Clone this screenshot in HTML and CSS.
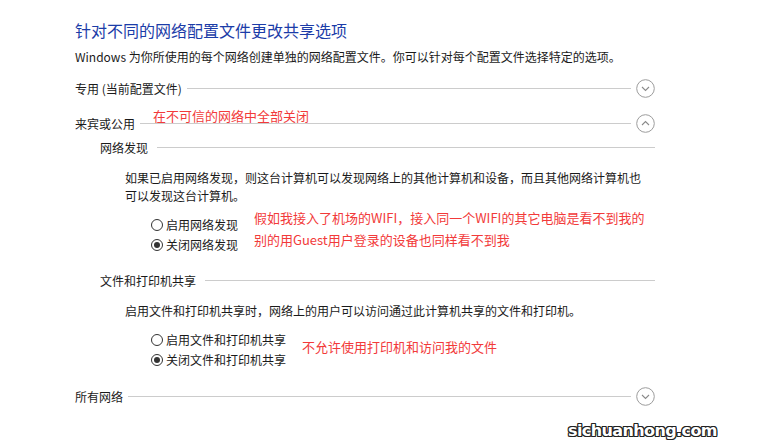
FILE: index.html
```html
<!DOCTYPE html>
<html lang="zh-CN">
<head>
<meta charset="utf-8">
<link rel="stylesheet" href="styles.css">
</head>
<body>
<div class="page">
  <h1 class="title">针对不同的网络配置文件更改共享选项</h1>
  <p class="desc">Windows 为你所使用的每个网络创建单独的网络配置文件。你可以针对每个配置文件选择特定的选项。</p>

  <div class="sec sec1">
    <span class="label">专用 (当前配置文件)</span>
    <span class="rule"></span>
    <svg class="toggle" width="19" height="19" viewBox="0 0 19 19"><circle cx="9.5" cy="9.5" r="8.8" fill="none" stroke="#9c9c9c" stroke-width="1"/><path d="M6 8l3.5 3.5L13 8" fill="none" stroke="#8a8a8a" stroke-width="1.1"/></svg>
  </div>

  <div class="sec sec2">
    <span class="label">来宾或公用</span>
    <span class="rule"></span>
    <svg class="toggle" width="19" height="19" viewBox="0 0 19 19"><circle cx="9.5" cy="9.5" r="8.8" fill="none" stroke="#9c9c9c" stroke-width="1"/><path d="M6 11l3.5-3.5L13 11" fill="none" stroke="#8a8a8a" stroke-width="1.1"/></svg>
    <span class="note note1">在不可信的网络中全部关闭</span>
  </div>

  <div class="sub sub1">
    <span class="label">网络发现</span>
    <span class="rule"></span>
  </div>
  <p class="para para1">如果已启用网络发现，则这台计算机可以发现网络上的其他计算机和设备，而且其他网络计算机也<br>可以发现这台计算机。</p>
  <div class="radios radios1">
    <div class="radio"><span class="dot"></span>启用网络发现</div>
    <div class="radio"><span class="dot on"></span>关闭网络发现</div>
    <span class="note note2">假如我接入了机场的WIFI，接入同一个WIFI的其它电脑是看不到我的<br>别的用Guest用户登录的设备也同样看不到我</span>
  </div>

  <div class="sub sub2">
    <span class="label">文件和打印机共享</span>
    <span class="rule"></span>
  </div>
  <p class="para para2">启用文件和打印机共享时，网络上的用户可以访问通过此计算机共享的文件和打印机。</p>
  <div class="radios radios2">
    <div class="radio"><span class="dot"></span>启用文件和打印机共享</div>
    <div class="radio"><span class="dot on"></span>关闭文件和打印机共享</div>
    <span class="note note3">不允许使用打印机和访问我的文件</span>
  </div>

  <div class="sec sec3">
    <span class="label">所有网络</span>
    <span class="rule"></span>
    <svg class="toggle" width="19" height="19" viewBox="0 0 19 19"><circle cx="9.5" cy="9.5" r="8.8" fill="none" stroke="#9c9c9c" stroke-width="1"/><path d="M6 8l3.5 3.5L13 8" fill="none" stroke="#8a8a8a" stroke-width="1.1"/></svg>
  </div>

  <div class="watermark">sichuanhong.com</div>
</div>
</body>
</html>
```

FILE: styles.css
```css
html, body {
  margin: 0;
  padding: 0;
  background: #ffffff;
}
body {
  width: 757px;
  height: 445px;
  overflow: hidden;
  font-family: "Microsoft YaHei", "Noto Sans CJK SC", "Noto Sans", sans-serif;
  color: #1a1a1a;
  font-size: 12px;
}
.page {
  padding-left: 75px;
  width: 580px;
}
.title {
  margin: 20px 0 0;
  font-size: 16px;
  line-height: 20px;
  font-weight: normal;
  color: #1b3ca8;
}
.desc {
  margin: 8px 0 0;
  line-height: 18px;
}
.sec, .sub {
  display: flex;
  align-items: center;
  position: relative;
}
.sec { height: 22px; }
.sub { height: 18px; margin-left: 25px; }
.rule {
  flex: 1;
  height: 1px;
  background: #cccccc;
  margin-left: 5px;
}
.toggle {
  margin-left: 5px;
  flex: none;
}
.sec1 { margin-top: 11px; }
.sec2 { margin-top: 13px; }
.sub1 { margin-top: 4px; }
.sub1 .rule { margin-left: 9px; }
.sub2 { margin-top: 16px; }
.sub2 .rule { margin-left: 9px; }
.sec3 { margin-top: 15px; }
.sec3 .rule { margin-left: 5px; }
.para {
  margin: 13px 0 0 50px;
  line-height: 18px;
}
.radios {
  position: relative;
  margin: 10px 0 0 76px;
}
.radio {
  display: flex;
  align-items: center;
  height: 20px;
  line-height: 20px;
}
.dot {
  width: 10px;
  height: 10px;
  border: 1px solid #333333;
  border-radius: 50%;
  margin-right: 3px;
  position: relative;
  box-sizing: content-box;
  flex: none;
}
.dot.on::after {
  content: "";
  position: absolute;
  left: 2px;
  top: 2px;
  width: 6px;
  height: 6px;
  border-radius: 50%;
  background: #333333;
}
.note {
  position: absolute;
  color: #f23a3a;
  font-size: 13px;
  line-height: 22px;
  white-space: nowrap;
}
.note1 { left: 78px; top: -7px; }
.note2 { left: 103px; top: -8px; }
.note3 { left: 151px; top: 6px; }
.watermark {
  margin: 14px 0 0 493px;
  font-family: "DejaVu Sans", sans-serif;
  font-weight: bold;
  font-size: 16px;
  line-height: 20px;
  color: #ffffff;
  letter-spacing: -0.6px;
  text-shadow: 1px 0 0 #222, -1px 0 0 #222, 0 1px 0 #222, 0 -1px 0 #222, 1px 1px 0 #222, -1px -1px 0 #222, 1px -1px 0 #222, -1px 1px 0 #222;
  white-space: nowrap;
}
```
